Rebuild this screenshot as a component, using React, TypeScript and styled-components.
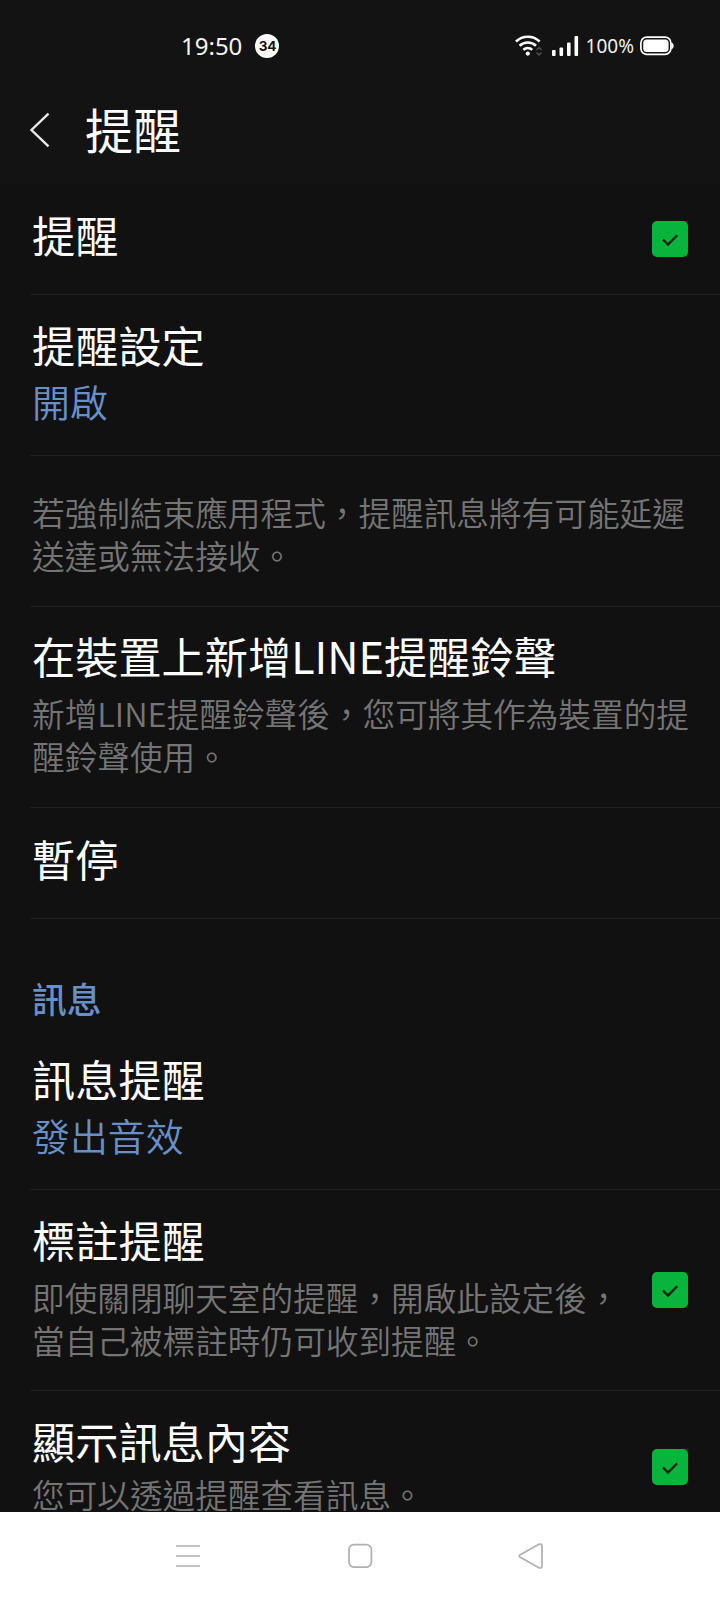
import React from "react";
import styled, { createGlobalStyle } from "styled-components";

const GlobalStyle = createGlobalStyle`
  * { box-sizing: border-box; }
  body { margin: 0; background: #111111; }
`;

const Screen = styled.div`
  width: 720px;
  height: 1600px;
  display: flex;
  flex-direction: column;
  overflow: hidden;
  background: #111111;
  color: #fff;
  font-family: "Noto Sans CJK TC", sans-serif;
`;

const Top = styled.header`
  flex: none;
  height: 184px;
  background: #131313;
`;

const StatusBar = styled.div`
  height: 92px;
  display: flex;
  align-items: center;
  padding: 0 46px 0 181px;
`;

const Clock = styled.span`
  font: 400 24px/30px "Noto Sans", sans-serif;
  color: #f4f4f4;
`;

const Badge = styled.span`
  width: 24px;
  height: 24px;
  margin-left: 13px;
  border-radius: 50%;
  background: #fff;
  color: #111;
  font: 700 13.5px/24px Inter, sans-serif;
  letter-spacing: -0.4px;
  text-align: center;
`;

const StatusIcons = styled.div`
  margin-left: auto;
  display: flex;
  align-items: center;
`;

const Percent = styled.span`
  font: 400 19px/24px "Noto Sans", sans-serif;
  margin: 0 6px 0 7px;
  color: #f0f0f0;
`;

const TitleBar = styled.div`
  height: 76px;
  display: flex;
  align-items: center;
  padding-left: 29px;
`;

const PageTitle = styled.h1`
  margin: 0 0 5px 35px;
  font-size: 48px;
  line-height: 60px;
  font-weight: 400;
`;

const List = styled.main`
  flex: 1;
  min-height: 0;
  overflow: hidden;
`;

const Row = styled.section<{ $h: number; $top?: number; $last?: boolean }>`
  height: ${(p) => p.$h}px;
  margin-left: 30px;
  padding: ${(p) => p.$top ?? 21}px 32px 0 2px;
  border-bottom: ${(p) => (p.$last ? "none" : "1px solid #202020")};
  display: flex;
  justify-content: space-between;
`;

const Title = styled.h2`
  margin: 0;
  font-size: 43.2px;
  line-height: 56px;
  font-weight: 400;
`;

const Value = styled.p`
  margin: 1px 0 0;
  font-size: 37.9px;
  line-height: 56px;
  font-weight: 350;
  color: #6890c8;
`;

const Description = styled.p<{ $gap?: number; $line?: number }>`
  margin: ${(p) => p.$gap ?? 0}px 0 0;
  font-size: 32.65px;
  line-height: ${(p) => p.$line ?? 42.5}px;
  font-weight: 350;
  color: #757575;
  white-space: nowrap;
`;

const SectionLabel = styled.h3`
  height: 110px;
  margin: 0;
  padding: 54px 0 0 32px;
  font-size: 34.8px;
  line-height: 50px;
  font-weight: 500;
  color: #6890c8;
`;

const Check = styled.span<{ $y: number }>`
  flex: none;
  width: 36px;
  height: 36px;
  margin-top: ${(p) => p.$y}px;
  border-radius: 5px;
  background: #07b53b;
`;

const NavBar = styled.nav`
  flex: none;
  height: 88px;
  background: #fff;
  display: flex;
  align-items: center;
  justify-content: space-between;
  padding: 0 175px 0 174px;
`;

const Checkbox = ({ y }: { y: number }) => (
  <Check $y={y} role="checkbox" aria-checked="true">
    <svg width="36" height="36" viewBox="0 0 36 36" fill="none" stroke="#0b1f10" strokeWidth="2.3">
      <path d="M11 18.5l5 5L25.2 14.3" />
    </svg>
  </Check>
);

const WifiIcon = () => (
  <svg width="28" height="22" viewBox="0 0 28 22" fill="none" stroke="#fff" strokeWidth="2.6">
    <path d="M1 6.5a17 17 0 0 1 23.6 0" />
    <path d="M4.6 10.8a12 12 0 0 1 16.4 0" />
    <path d="M8.3 14.9a6.7 6.7 0 0 1 9 0" />
    <circle cx="12.8" cy="18.6" r="2.1" fill="#fff" stroke="none" />
    <path d="M21.5 15l2.5-2.5 2.5 2.5M21.5 17.5l2.5 2.5 2.5-2.5" stroke="#505050" strokeWidth="1.5" />
  </svg>
);

const SignalGlyph = styled.svg`
  margin-left: 9px;
`;

const SignalIcon = () => (
  <SignalGlyph width="27" height="22" viewBox="0 0 27 22" fill="#fff">
    <rect x="0" y="15" width="3.6" height="6" rx="1" />
    <rect x="7.5" y="12.5" width="3.6" height="8.5" rx="1" />
    <rect x="15" y="7.5" width="3.6" height="13.5" rx="1" />
    <rect x="22.5" y="1" width="3.6" height="20" rx="1" />
  </SignalGlyph>
);

const BatteryIcon = () => (
  <svg width="34" height="20" viewBox="0 0 34 20">
    <rect x="0.9" y="1.2" width="30" height="17.2" rx="5.8" fill="none" stroke="#fff" strokeWidth="1.7" />
    <rect x="3.2" y="3.5" width="25.4" height="12.6" rx="3.6" fill="#fff" />
    <path d="M31.4 6.5c3 1 3 5.8 0 6.8z" fill="#fff" />
  </svg>
);

export default function App() {
  return (
    <Screen>
      <GlobalStyle />
      <Top>
        <StatusBar>
          <Clock>19:50</Clock>
          <Badge>34</Badge>
          <StatusIcons>
            <WifiIcon />
            <SignalIcon />
            <Percent>100%</Percent>
            <BatteryIcon />
          </StatusIcons>
        </StatusBar>
        <TitleBar>
          <svg width="21" height="36" viewBox="0 0 21 36" fill="none" stroke="#e8e8e8" strokeWidth="2.4">
            <path d="M19.5 1.7L2.5 18l17 16.3" />
          </svg>
          <PageTitle>提醒</PageTitle>
        </TitleBar>
      </Top>
      <List>
        <Row $h={111} $top={22}>
          <Title>提醒</Title>
          <Checkbox y={15} />
        </Row>
        <Row $h={161}>
          <div>
            <Title>提醒設定</Title>
            <Value>開啟</Value>
          </div>
        </Row>
        <Row $h={151} $top={35}>
          <Description>
            若強制結束應用程式，提醒訊息將有可能延遲
            <br />
            送達或無法接收。
          </Description>
        </Row>
        <Row $h={201} $top={20}>
          <div>
            <Title>在裝置上新增LINE提醒鈴聲</Title>
            <Description $gap={9}>
              新增LINE提醒鈴聲後，您可將其作為裝置的提
              <br />
              醒鈴聲使用。
            </Description>
          </div>
        </Row>
        <Row $h={111} $top={22}>
          <Title>暫停</Title>
        </Row>
        <SectionLabel>訊息</SectionLabel>
        <Row $h={161}>
          <div>
            <Title>訊息提醒</Title>
            <Value>發出音效</Value>
          </div>
        </Row>
        <Row $h={201}>
          <div>
            <Title>標註提醒</Title>
            <Description $gap={9}>
              即使關閉聊天室的提醒，開啟此設定後，
              <br />
              當自己被標註時仍可收到提醒。
            </Description>
          </div>
          <Checkbox y={61} />
        </Row>
        <Row $h={121} $last>
          <div>
            <Title>顯示訊息內容</Title>
            <Description $gap={8} $line={36}>您可以透過提醒查看訊息。</Description>
          </div>
          <Checkbox y={37} />
        </Row>
      </List>
      <NavBar>
        <svg width="28" height="26" viewBox="0 0 28 26" stroke="#b0b0b0" strokeWidth="1.7">
          <path d="M2 3h24M2 13h24M2 23h24" />
        </svg>
        <svg width="26" height="26" viewBox="0 0 26 26" fill="none" stroke="#b0b0b0" strokeWidth="1.7">
          <rect x="2" y="1.7" width="22.4" height="22.4" rx="5" />
        </svg>
        <svg width="28" height="28" viewBox="0 0 28 28" fill="none" stroke="#b0b0b0" strokeWidth="1.7" strokeLinejoin="round">
          <path d="M3.2 12.7L22 2.3Q25 1.2 25 4V24Q25 26.8 22 25.7L3.2 15.3Q1.3 14 3.2 12.7Z" />
        </svg>
      </NavBar>
    </Screen>
  );
}
